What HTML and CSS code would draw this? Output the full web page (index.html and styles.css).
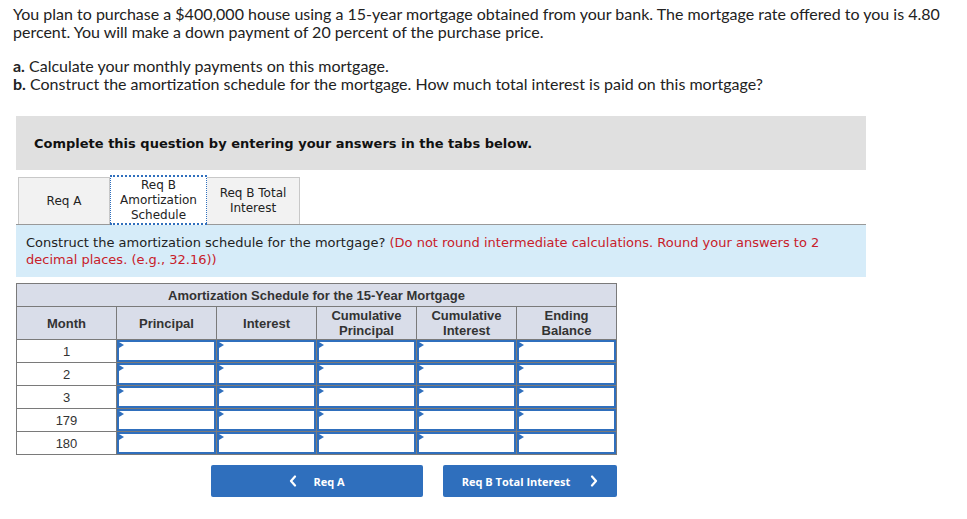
FILE: index.html
```html
<!DOCTYPE html>
<html>
<head>
<meta charset="utf-8">
<link rel="stylesheet" href="styles.css">
</head>
<body>
<div class="question">
  <p class="intro">You plan to purchase a $400,000 house using a 15-year mortgage obtained from your bank. The mortgage rate offered to you is 4.80 percent. You will make a down payment of 20 percent of the purchase price.</p>
  <p class="parts"><b>a.</b> Calculate your monthly payments on this mortgage.<br><b>b.</b> Construct the amortization schedule for the mortgage. How much total interest is paid on this mortgage?</p>
</div>
<div class="panel">
  <div class="banner">Complete this question by entering your answers in the tabs below.</div>
  <div class="tabs">
    <div class="tab">Req A</div>
    <div class="tab active">Req B<br>Amortization<br>Schedule</div>
    <div class="tab">Req B Total<br>Interest</div>
  </div>
  <div class="instructions">Construct the amortization schedule for the mortgage? <span class="red">(Do not round intermediate calculations. Round your answers to 2 decimal places. (e.g., 32.16))</span></div>
  <table class="sched">
    <thead>
      <tr><th colspan="6" class="title">Amortization Schedule for the 15-Year Mortgage</th></tr>
      <tr><th>Month</th><th>Principal</th><th>Interest</th><th>Cumulative<br>Principal</th><th>Cumulative<br>Interest</th><th>Ending<br>Balance</th></tr>
    </thead>
    <tbody>
      <tr><td class="m">1</td><td class="in"><div class="box"></div></td><td class="in"><div class="box"></div></td><td class="in"><div class="box"></div></td><td class="in"><div class="box"></div></td><td class="in"><div class="box"></div></td></tr>
      <tr><td class="m">2</td><td class="in"><div class="box"></div></td><td class="in"><div class="box"></div></td><td class="in"><div class="box"></div></td><td class="in"><div class="box"></div></td><td class="in"><div class="box"></div></td></tr>
      <tr><td class="m">3</td><td class="in"><div class="box"></div></td><td class="in"><div class="box"></div></td><td class="in"><div class="box"></div></td><td class="in"><div class="box"></div></td><td class="in"><div class="box"></div></td></tr>
      <tr><td class="m">179</td><td class="in"><div class="box"></div></td><td class="in"><div class="box"></div></td><td class="in"><div class="box"></div></td><td class="in"><div class="box"></div></td><td class="in"><div class="box"></div></td></tr>
      <tr><td class="m">180</td><td class="in"><div class="box"></div></td><td class="in"><div class="box"></div></td><td class="in"><div class="box"></div></td><td class="in"><div class="box"></div></td><td class="in"><div class="box"></div></td></tr>
    </tbody>
  </table>
  <div class="nav">
    <div class="btn prev"><svg class="chev" width="8" height="12" viewBox="0 0 8 12"><polyline points="6,1.5 2,6 6,10.5" fill="none" stroke="#fff" stroke-width="2.2" stroke-linecap="round" stroke-linejoin="round"/></svg><span>Req A</span></div>
    <div class="btn next"><span>Req B Total Interest</span><svg class="chev" width="8" height="12" viewBox="0 0 8 12"><polyline points="2,1.5 6,6 2,10.5" fill="none" stroke="#fff" stroke-width="2.2" stroke-linecap="round" stroke-linejoin="round"/></svg></div>
  </div>
</div>
</body>
</html>
```
FILE: styles.css
```css
html, body { margin: 0; padding: 0; background: #fff; }
body { font-family: "Lato", "Open Sans", sans-serif; color: #222; }
.question { padding: 5px 12px 0 13px; font-size: 16px; line-height: 17.5px; }
.question p { margin: 0; }
.intro { width: 940px; }
.parts { margin-top: 17px !important; }
.panel { padding: 24px 0 0 16px; }
.banner { width: 832px; height: 54px; background: #e0e0e0; font-family: "DejaVu Sans", Verdana, sans-serif; font-weight: bold; font-size: 13px; color: #111; padding-left: 18px; display: flex; align-items: center; }
.tabs { display: flex; margin-top: 7px; padding-left: 2px; height: 47px; align-items: stretch; }
.tab { flex-shrink: 0; font-family: "DejaVu Sans", Verdana, sans-serif; font-size: 12px; line-height: 15px; color: #222; background: #f2f2f2; border: 1px solid #c8c8c8; border-bottom: none; display: flex; align-items: center; justify-content: center; text-align: center; box-sizing: border-box; }
.tab:nth-child(1) { width: 92px; }
.tab:nth-child(2) { width: 97px; }
.tab:nth-child(3) { width: 93px; border-left: none; }
.tab.active { background: #fff; border: 1px dotted #2f6fbd; border-width: 2px 1px 2px 1px; margin-top: -2px; height: 50px; }
.instructions { width: 840px; background: #d6ecf9; border-top: 1px solid #999; font-family: "DejaVu Sans", Verdana, sans-serif; font-size: 13px; line-height: 17px; color: #222; padding: 9px 0 8px 10px; height: 35px; }
.red { color: #c8202a; }
.sched { margin-top: 6px; border-collapse: collapse; font-family: "Liberation Sans", Arial, sans-serif; color: #333; }
.sched th, .sched td { border: 1px solid #7a7a7a; padding: 0; }
.sched th { background: #d9dde9; font-weight: bold; font-size: 13px; line-height: 15px; width: 99px; height: 32px; }
.sched th.title { height: 22px; }
.sched td { height: 22px; width: 99px; }
.sched td.m { text-align: center; font-size: 13px; }
.box { height: 18px; border: 2px solid #2f6fbd; position: relative; }
.box::before { content: ""; position: absolute; left: 0; top: 0; border-left: 5px solid #2f6fbd; border-top: 3.5px solid transparent; border-bottom: 3.5px solid transparent; }
.nav { display: flex; margin-top: 10px; padding-left: 195px; gap: 20px; }
.btn { height: 32px; background: #2f6fbd; border-radius: 2px; color: #fff; font-family: "Open Sans", "Liberation Sans", sans-serif; font-weight: bold; font-size: 11px; display: flex; align-items: center; justify-content: center; gap: 16px; }
.btn.prev { width: 212px; }
.btn.next { width: 174px; gap: 20px; }
.chev { display: block; }
```
